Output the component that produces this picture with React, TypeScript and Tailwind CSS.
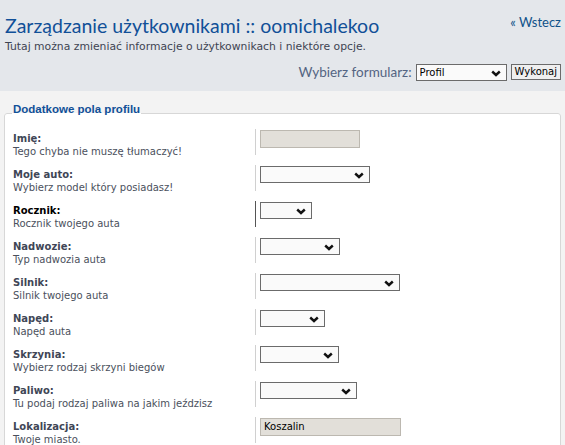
import React from "react";

interface FieldRow {
  label: string;
  desc: string;
  kind: "text" | "select";
  width: number;
  value?: string;
  active?: boolean;
}

const rows: FieldRow[] = [
  { label: "Imię:", desc: "Tego chyba nie muszę tłumaczyć!", kind: "text", width: 100 },
  { label: "Moje auto:", desc: "Wybierz model który posiadasz!", kind: "select", width: 110 },
  { label: "Rocznik:", desc: "Rocznik twojego auta", kind: "select", width: 52, active: true },
  { label: "Nadwozie:", desc: "Typ nadwozia auta", kind: "select", width: 80 },
  { label: "Silnik:", desc: "Silnik twojego auta", kind: "select", width: 140 },
  { label: "Napęd:", desc: "Napęd auta", kind: "select", width: 65 },
  { label: "Skrzynia:", desc: "Wybierz rodzaj skrzyni biegów", kind: "select", width: 79 },
  { label: "Paliwo:", desc: "Tu podaj rodzaj paliwa na jakim jeździsz", kind: "select", width: 97 },
  { label: "Lokalizacja:", desc: "Twoje miasto.", kind: "text", width: 141, value: "Koszalin" },
];

const Chevron: React.FC = () => (
  <svg width="10" height="7" viewBox="0 0 10 7" className="pointer-events-none absolute right-[6px] top-[6px] block">
    <path d="M1.2 1.5 L5 5 L8.8 1.5" fill="none" stroke="#111" strokeWidth="2.4" />
  </svg>
);

/**
 * FakeSelect
 * Empty dropdown as drawn in the ACP form
 */
const FakeSelect: React.FC<{ width: number; value?: string; className?: string }> = ({
  width,
  value = "",
  className = "",
}) => (
  <div className={`relative h-[17px] ${className}`} style={{ width }}>
    <select
      defaultValue={value}
      className="block h-[17px] w-full appearance-none rounded-none border border-[#6b6b6b] bg-[#fafafa] px-[3px] py-0 text-[10px] leading-[15px] text-black outline-none [font-family:'DejaVu_Sans',sans-serif]"
    >
      <option value={value}>{value}</option>
    </select>
    <Chevron />
  </div>
);

const App: React.FC = () => {
  return (
    <div className="h-[445px] w-[565px] overflow-hidden bg-[#f3f3f3] [font-family:'DejaVu_Sans',sans-serif]">
      {/* Header */}
      <div className="h-[91px] bg-[#e4e7eb] pl-[5px] pr-[4px] pt-[12px]">
        <div className="flex items-start justify-between">
          <h1 className="mt-[1px] text-[19.5px] leading-[26px] text-[#115098] [font-family:Lato,sans-serif]">
            Zarządzanie użytkownikami :: oomichalekoo
          </h1>
          <a href="#" className="mt-[1px] text-[13px] leading-[18px] text-[#105289] [font-family:Lato,sans-serif]">
            « Wstecz
          </a>
        </div>
        <p className="mt-[1px] text-[10.8px] leading-[14px] text-[#3e4452]">
          Tutaj można zmieniać informacje o użytkownikach i niektóre opcje.
        </p>
        <div className="mt-[8px] flex items-center justify-end">
          <span className="mr-[4px] text-[13.5px] text-[#536482] [font-family:Lato,sans-serif]">
            Wybierz formularz:
          </span>
          <FakeSelect width={91} value="Profil" />
          <button className="ml-[4px] h-[16px] border border-[#6b6b6b] bg-[#efefef] px-[3px] text-[10px] leading-none text-black">
            Wykonaj
          </button>
        </div>
      </div>

      {/* Fieldset */}
      <fieldset className="mx-[4px] mt-[12px] rounded-[3px] border border-[#d7d7d7] bg-white pt-[6px]">
        <legend className="ml-[7px] px-[1px] pb-[8px] text-[11.5px] font-bold leading-[12px] text-[#115098] [font-family:'Liberation_Sans',sans-serif]">
          Dodatkowe pola profilu
        </legend>
        {rows.map((row) => (
          <div key={row.label} className="mb-[10px] flex h-[26px]">
            <div className="w-[250px] pl-[8px] pt-[3px]">
              <div
                className={`text-[10px] font-bold leading-[13px] ${row.active ? "text-black" : "text-[#404656]"}`}
              >
                {row.label}
              </div>
              <div className="text-[10px] leading-[13px] text-[#4a505c]">{row.desc}</div>
            </div>
            <div
              className={`h-[26px] border-l pl-[4px] pt-[1px] ${row.active ? "border-[#555]" : "border-[#d0d0d0]"}`}
            >
              {row.kind === "text" ? (
                <div
                  className="h-[18px] border border-[#bcb8b0] bg-[#e2dfd9] px-[3px] text-[10px] leading-[16px] text-black"
                  style={{ width: row.width }}
                >
                  {row.value}
                </div>
              ) : (
                <FakeSelect width={row.width} />
              )}
            </div>
          </div>
        ))}
      </fieldset>
    </div>
  );
};

export default App;
